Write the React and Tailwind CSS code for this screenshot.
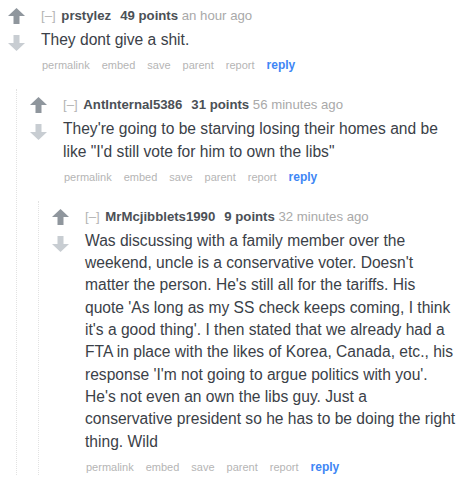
import React from "react";

const ArrowUp = () => (
  <svg width="17" height="16" viewBox="0 0 17 16">
    <path d="M8.5 0 L17 8 L11.5 8 L11.5 16 L5.5 16 L5.5 8 L0 8 Z" fill="#8f969d" />
  </svg>
);

const ArrowDown = () => (
  <svg width="17" height="16" viewBox="0 0 17 16">
    <path d="M5.5 0 L11.5 0 L11.5 8 L17 8 L8.5 16 L0 8 L5.5 8 Z" fill="#c8cdd2" />
  </svg>
);

const comments = [
  {
    user: "prstylez",
    points: "49 points",
    time: "an hour ago",
    lines: ["They dont give a shit."],
  },
  {
    user: "AntInternal5386",
    points: "31 points",
    time: "56 minutes ago",
    lines: [
      "They're going to be starving losing their homes and be",
      "like \"I'd still vote for him to own the libs\"",
    ],
  },
  {
    user: "MrMcjibblets1990",
    points: "9 points",
    time: "32 minutes ago",
    lines: [
      "Was discussing with a family member over the",
      "weekend, uncle is a conservative voter. Doesn't",
      "matter the person. He's still all for the tariffs. His",
      "quote 'As long as my SS check keeps coming, I think",
      "it's a good thing'. I then stated that we already had a",
      "FTA in place with the likes of Korea, Canada, etc., his",
      "response 'I'm not going to argue politics with you'.",
      "He's not even an own the libs guy. Just a",
      "conservative president so he has to be doing the right",
      "thing. Wild",
    ],
  },
];

function Comment({ index }) {
  const c = comments[index];
  if (!c) return null;
  return (
    <div className="pt-[8px]">
      <div className="flex">
        {/* vote arrows */}
        <div className="w-[41px] shrink-0 pl-[8px] flex flex-col gap-[11px]">
          <ArrowUp />
          <ArrowDown />
        </div>
        <div className="min-w-0 flex-1">
          <div className="text-[13.2px] leading-[16px] text-[#a9a9a9] whitespace-nowrap">
            <span className="text-[#b4b4b4]">[–]</span>{" "}
            <span className="font-bold text-[#4b5056] ml-[2px]">{c.user}</span>
            <span className="font-bold text-[#4b5056] ml-[9px]">{c.points}</span>{" "}
            <span>{c.time}</span>
          </div>
          <div className="mt-[5px] text-[15.6px] leading-[22.3px] text-[#3b4148]">
            {c.lines.map((l, i) => (
              <div key={i} className="whitespace-nowrap">{l}</div>
            ))}
          </div>
          <div className="mt-[7px] flex items-baseline gap-[12px] text-[11px] leading-[15px] text-[#b5b5b5] pl-[1px]">
            <span>permalink</span>
            <span>embed</span>
            <span>save</span>
            <span>parent</span>
            <span>report</span>
            <span className="font-bold text-[#3e86f5] text-[12px]">reply</span>
          </div>
        </div>
      </div>
      {comments[index + 1] && (
        <div className="ml-[16px] mt-[16px] border-l border-dotted border-[#e2e2e2] pl-[5px]">
          <Comment index={index + 1} />
        </div>
      )}
    </div>
  );
}

export default function App() {
  return (
    <div
      className="w-[475px] h-[484px] overflow-hidden bg-white"
      style={{ fontFamily: '"Liberation Sans", Arial, sans-serif' }}
    >
      <Comment index={0} />
    </div>
  );
}
